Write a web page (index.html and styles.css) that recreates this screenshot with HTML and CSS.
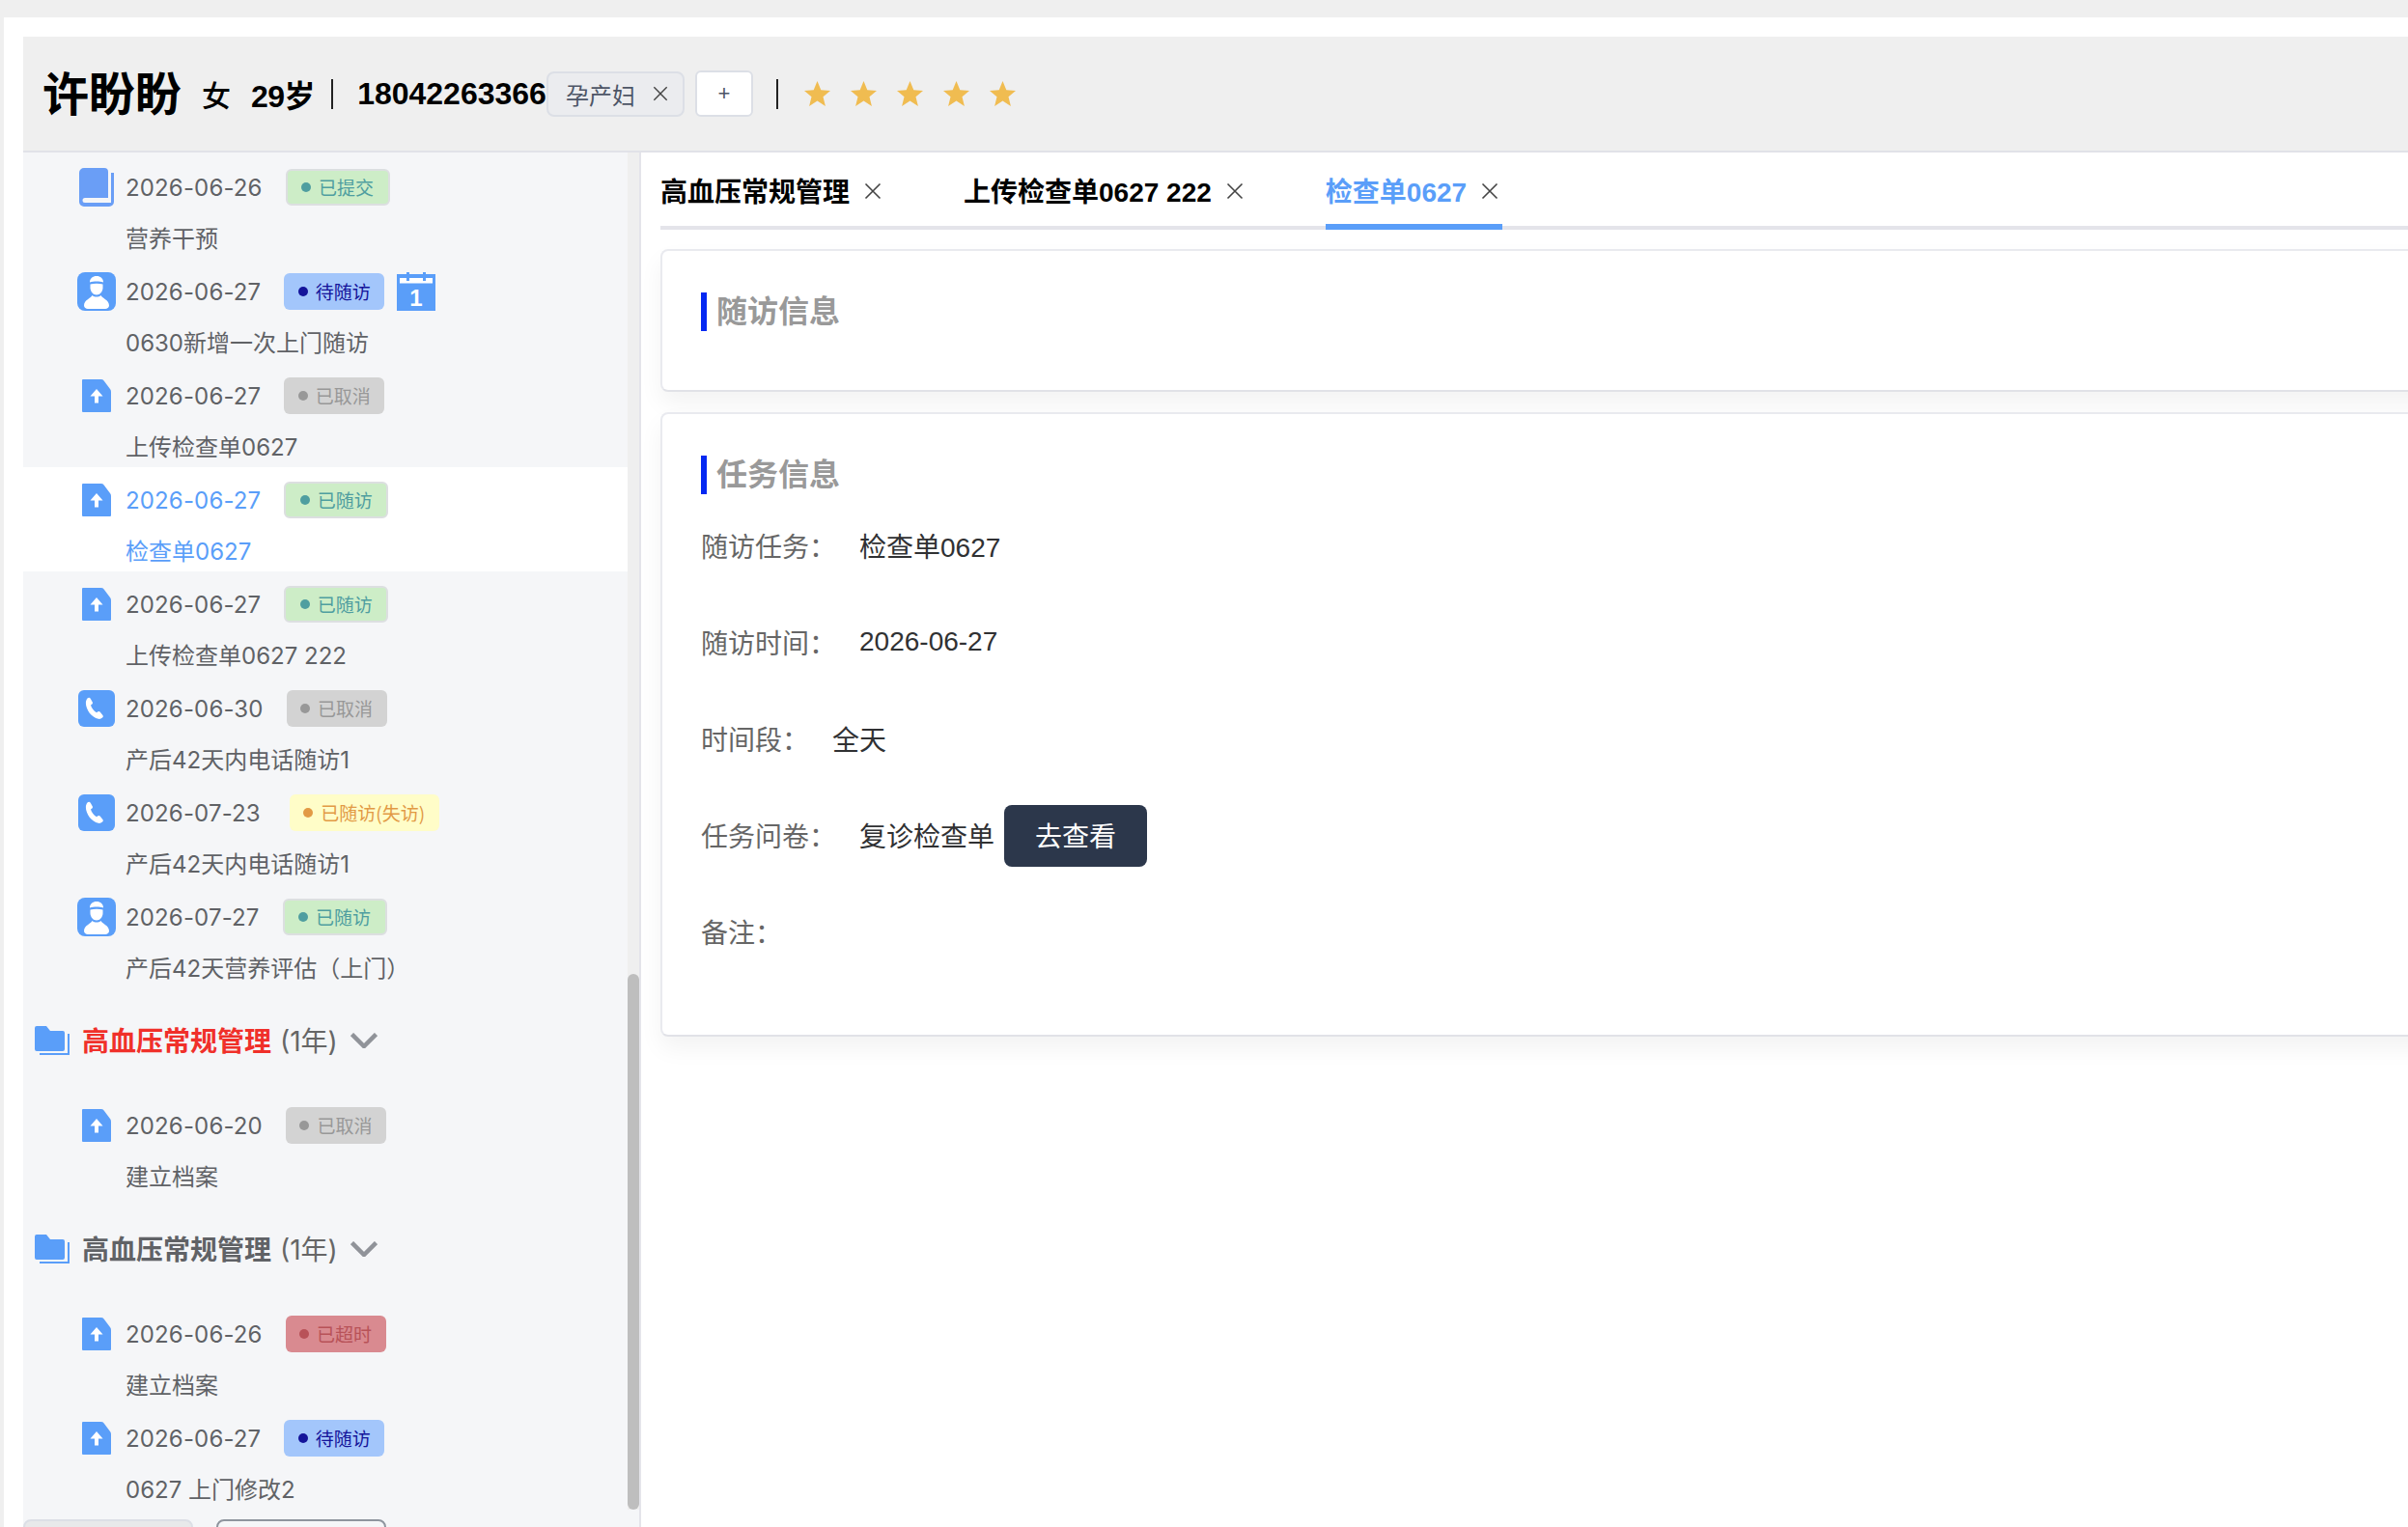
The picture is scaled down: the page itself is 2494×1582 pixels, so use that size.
FILE: index.html
```html
<!DOCTYPE html>
<html lang="zh-CN">
<head>
<meta charset="utf-8">
<title>随访</title>
<link rel="stylesheet" href="styles.css">
</head>
<body>
<svg class="defs" width="0" height="0" aria-hidden="true">
  <symbol id="i-book" viewBox="0 0 36 40"><path fill="#6a9ef6" d="M0 5a5 5 0 0 1 5-5h21a4 4 0 0 1 4 4v27H6a2.500 2.500 0 0 0 0 5h27V5h3v30a5 5 0 0 1-5 5H5a5 5 0 0 1-5-5z"/></symbol>
  <symbol id="i-person" viewBox="0 0 40 40"><rect width="40" height="40" rx="8" fill="#5a9ef9"/><path fill="#fff" d="M13 10.500c0-4 3-6.500 7-6.500s7 2.500 7 6.500c-4-1.300-10-1.300-14 0z"/><path fill="#fff" d="M13.500 12.500c4-1 9-1 13 0v3.500c0 4-3 7.500-6.500 7.500s-6.500-3.500-6.500-7.500z"/><path fill="#fff" d="M15.500 24c-1 3-8.500 4.500-8.500 10.500 0 2 2 3.500 4 3.500h18c2 0 4-1.500 4-3.500 0-6-7.500-7.500-8.500-10.500-1.200 1-3 1.500-4.500 1.500s-3.300-.5-4.500-1.500z"/></symbol>
  <symbol id="i-file" viewBox="0 0 30 34"><path fill="#5a9ef9" d="M1 0h19q2 0 3 2l6 8q1 1 1 3v20q0 1-1 1H1q-1 0-1-1V1q0-1 1-1z"/><path fill="#fff" d="M15 10l6.500 7.500h-4.500v7h-4v-7H8.500z"/></symbol>
  <symbol id="i-phone" viewBox="0 0 38 38"><rect width="38" height="38" rx="6" fill="#5a9ef9"/><path fill="#fff" d="M9.500 8.500c1-1 2.500-1 3.200.2l2 3.500c.5.9.3 1.800-.4 2.400l-1.300 1c.8 3 3 6 6 7.600l1.500-.9c.8-.5 1.700-.3 2.300.4l2.600 3.200c.7.900.5 2-.4 2.700-1.200 1-2.600 1.500-4.100 1.200-7-1.300-13-9.500-13-16.500 0-1.800.6-3.400 1.600-4.800z"/></symbol>
  <symbol id="i-folder" viewBox="0 0 36 31"><path fill="#5a9ef9" d="M2 0h10l4 5h13a2 2 0 0 1 2 2v17a2 2 0 0 1-2 2H2a2 2 0 0 1-2-2V2a2 2 0 0 1 2-2z"/><path fill="none" stroke="#5a9ef9" stroke-width="2" d="M5 29h30V8"/></symbol>
  <symbol id="i-chev" viewBox="0 0 28 16"><path fill="none" stroke="#909399" stroke-width="4.500" d="M1.500 1.500L14 14 26.500 1.500"/></symbol>
  <symbol id="i-x" viewBox="0 0 18 18"><path fill="none" stroke="#444" stroke-width="1.600" d="M1.500 1.500l15 15M16.500 1.500l-15 15"/></symbol>
  <symbol id="i-star" viewBox="0 0 27 26"><path fill="#f0bc51" d="M13.500 0l3.800 9.300 9.700.6-7.500 6.400 2.400 9.700-8.400-5.400-8.400 5.400 2.400-9.700L0 9.900l9.700-.6z"/></symbol>
</svg>

<div class="app">
  <header class="head">
    <h1 class="name">许盼盼</h1>
    <span class="sex">女</span>
    <span class="age">29岁</span>
    <i class="rule"></i>
    <span class="tel">18042263366</span>
    <span class="tag">孕产妇<svg class="tag-x"><use href="#i-x"/></svg></span>
    <button class="add">+</button>
    <i class="rule rule-2"></i>
    <div class="stars">
      <svg class="star"><use href="#i-star"/></svg>
      <svg class="star"><use href="#i-star"/></svg>
      <svg class="star"><use href="#i-star"/></svg>
      <svg class="star"><use href="#i-star"/></svg>
      <svg class="star"><use href="#i-star"/></svg>
    </div>
  </header>

  <div class="body">
    <aside class="side">
      <div class="side-top">
        <div class="list">
          <div class="row">
            <div class="line"><span class="ico"><svg class="i-book"><use href="#i-book"/></svg></span><span class="date">2026-06-26</span><span class="badge ok"><i></i>已提交</span></div>
            <div class="title">营养干预</div>
          </div>
          <div class="row">
            <div class="line"><span class="ico"><svg class="i-40"><use href="#i-person"/></svg></span><span class="date">2026-06-27</span><span class="badge wait"><i></i>待随访</span><svg class="i-40 cal" viewBox="0 0 40 40"><rect y="2" width="40" height="38" fill="#5a9ef9"/><rect x="3" y="6" width="34" height="5.500" fill="#fff"/><rect x="10" y="0" width="3" height="9" fill="#5a9ef9"/><rect x="27" y="0" width="3" height="9" fill="#5a9ef9"/><text class="cal-num" x="20" y="35" text-anchor="middle">1</text></svg></div>
            <div class="title">0630新增一次上门随访</div>
          </div>
          <div class="row">
            <div class="line"><span class="ico"><svg class="i-file"><use href="#i-file"/></svg></span><span class="date">2026-06-27</span><span class="badge off"><i></i>已取消</span></div>
            <div class="title">上传检查单0627</div>
          </div>
          <div class="row active">
            <div class="line"><span class="ico"><svg class="i-file"><use href="#i-file"/></svg></span><span class="date">2026-06-27</span><span class="badge ok"><i></i>已随访</span></div>
            <div class="title">检查单0627</div>
          </div>
          <div class="row">
            <div class="line"><span class="ico"><svg class="i-file"><use href="#i-file"/></svg></span><span class="date">2026-06-27</span><span class="badge ok"><i></i>已随访</span></div>
            <div class="title">上传检查单0627 222</div>
          </div>
          <div class="row">
            <div class="line"><span class="ico"><svg class="i-phone"><use href="#i-phone"/></svg></span><span class="date">2026-06-30</span><span class="badge off"><i></i>已取消</span></div>
            <div class="title">产后42天内电话随访1</div>
          </div>
          <div class="row">
            <div class="line"><span class="ico"><svg class="i-phone"><use href="#i-phone"/></svg></span><span class="date">2026-07-23</span><span class="badge warn"><i></i>已随访(失访)</span></div>
            <div class="title">产后42天内电话随访1</div>
          </div>
          <div class="row">
            <div class="line"><span class="ico"><svg class="i-40"><use href="#i-person"/></svg></span><span class="date">2026-07-27</span><span class="badge ok"><i></i>已随访</span></div>
            <div class="title">产后42天营养评估（上门）</div>
          </div>

          <div class="group">
            <svg class="i-folder"><use href="#i-folder"/></svg>
            <strong class="g-name red">高血压常规管理</strong>
            <span class="g-year">(1年)</span>
            <svg class="i-chev"><use href="#i-chev"/></svg>
          </div>
          <div class="row">
            <div class="line"><span class="ico"><svg class="i-file"><use href="#i-file"/></svg></span><span class="date">2026-06-20</span><span class="badge off"><i></i>已取消</span></div>
            <div class="title">建立档案</div>
          </div>

          <div class="group">
            <svg class="i-folder"><use href="#i-folder"/></svg>
            <strong class="g-name">高血压常规管理</strong>
            <span class="g-year">(1年)</span>
            <svg class="i-chev"><use href="#i-chev"/></svg>
          </div>
          <div class="row">
            <div class="line"><span class="ico"><svg class="i-file"><use href="#i-file"/></svg></span><span class="date">2026-06-26</span><span class="badge late"><i></i>已超时</span></div>
            <div class="title">建立档案</div>
          </div>
          <div class="row">
            <div class="line"><span class="ico"><svg class="i-file"><use href="#i-file"/></svg></span><span class="date">2026-06-27</span><span class="badge wait"><i></i>待随访</span></div>
            <div class="title">0627 上门修改2</div>
          </div>
        </div>
        <div class="track"><div class="thumb"></div></div>
      </div>
      <div class="side-foot">
        <button class="foot-btn"></button>
        <button class="foot-btn foot-btn-2"></button>
      </div>
    </aside>

    <main class="main">
      <nav class="tabs">
        <div class="tab"><span>高血压常规管理</span><svg class="tab-x"><use href="#i-x"/></svg></div>
        <div class="tab"><span>上传检查单0627 222</span><svg class="tab-x"><use href="#i-x"/></svg></div>
        <div class="tab on"><span>检查单0627</span><svg class="tab-x"><use href="#i-x"/></svg></div>
      </nav>

      <section class="card card-a">
        <h2 class="sec">随访信息</h2>
      </section>

      <section class="card card-b">
        <h2 class="sec">任务信息</h2>
        <div class="kv"><span class="k">随访任务：</span><span class="v">检查单0627</span></div>
        <div class="kv"><span class="k">随访时间：</span><span class="v">2026-06-27</span></div>
        <div class="kv"><span class="k">时间段：</span><span class="v">全天</span></div>
        <div class="kv"><span class="k">任务问卷：</span><span class="v">复诊检查单</span><button class="go">去查看</button></div>
        <div class="kv"><span class="k">备注：</span></div>
      </section>
    </main>
  </div>
</div>
</body>
</html>
```

FILE: styles.css
```css
* { box-sizing: border-box; }
html, body { margin: 0; height: 100%; }
body {
  background: #efefef;
  font-family: "Liberation Sans", "Noto Sans CJK SC", sans-serif;
  overflow: hidden;
}
.defs { display: block; width: 0; height: 0; }
.app {
  height: 1564px;
  margin: 18px 0 0 4px;
  padding: 20px 0 0 20px;
  background: #fff;
  display: flex;
  flex-direction: column;
  overflow: hidden;
}

/* header */
.head {
  flex: none;
  height: 120px;
  background: #efefef;
  border-bottom: 2px solid #e1e2e8;
  display: flex;
  align-items: center;
  padding-left: 20px;
  color: #000;
  font-weight: 700;
}
.name { margin: 0; padding-top: 3px; font-size: 48px; font-weight: 700; line-height: 1; }
.sex { font-size: 30px; margin-left: 21px; font-weight: 500; }
.age { font-size: 32px; margin-left: 21px; letter-spacing: -.5px; }
.rule { width: 2px; height: 31px; background: #222; margin-left: 17px; flex: none; }
.tel { font-size: 32px; margin-left: 25px; }
.tag {
  width: 143px;
  height: 47px;
  margin-left: 0;
  padding-left: 18px;
  display: flex;
  align-items: center;
  background: #ebecef;
  border: 2px solid #dcdfe6;
  border-radius: 8px;
  color: #4d5566;
  font-size: 24px;
  font-weight: 400;
}
.tag-x { width: 16px; height: 16px; margin-left: 18px; }
.add {
  width: 60px;
  height: 48px;
  margin-left: 11px;
  padding: 0;
  background: #fff;
  border: 2px solid #dcdfe6;
  border-radius: 6px;
  color: #4d5566;
  font: 400 22px "Liberation Sans", sans-serif;
}
.rule-2 { margin-left: 24px; }
.stars { display: flex; gap: 21px; margin-left: 27px; }
.star { width: 27px; height: 26px; display: block; }

/* layout */
.body { flex: 1; min-height: 0; display: flex; }
.side {
  flex: none;
  width: 640px;
  background: #f5f6f8;
  border-right: 2px solid #e4e4ea;
  display: flex;
  flex-direction: column;
}
.side-top { height: 1406px; flex: none; display: flex; overflow: hidden; }
.list { width: 626px; padding-top: 2px; }
.track {
  width: 12px;
  background: #efefef;
  display: flex;
  flex-direction: column;
  justify-content: flex-end;
}
.thumb { height: 555px; background: #bebebe; border-radius: 6px; }
.side-foot { display: flex; gap: 24px; padding-top: 10px; }
.foot-btn {
  width: 176px;
  height: 60px;
  padding: 0;
  background: #e8e9ea;
  border: 2px solid #dcdfe6;
  border-radius: 8px;
}
.foot-btn-2 { background: #f5f6f8; border-color: #8f959e; }

/* rows */
.row {
  height: 108px;
  padding-left: 56px;
  font-family: Inter, "Noto Sans CJK SC", sans-serif;
  font-size: 24px;
  color: #606266;
}
.row.active { background: #fff; color: #5a9ef9; }
.line { height: 68px; display: flex; align-items: center; }
.ico { width: 40px; height: 40px; flex: none; display: flex; align-items: center; justify-content: center; }
.date { margin: 2px 24px 0 10px; line-height: 1; letter-spacing: .15px; }
.title { margin-left: 50px; height: 38px; padding-top: 2px; line-height: 36px; white-space: nowrap; }
.i-40 { width: 40px; height: 40px; display: block; flex: none; }
.i-book { width: 36px; height: 40px; display: block; }
.i-file { width: 30px; height: 34px; display: block; }
.i-phone { width: 38px; height: 38px; display: block; }
.cal { margin-left: 13px; }
.cal-num { font: 700 24px "Liberation Sans", sans-serif; fill: #fff; }

.badge {
  height: 38px;
  padding: 0 14.500px 2px;
  display: inline-flex;
  align-items: center;
  gap: 8px;
  border-radius: 6px;
  font-family: "Noto Sans CJK SC", sans-serif;
  font-size: 19px;
  white-space: nowrap;
}
.badge i { width: 10px; height: 10px; margin-top: 2px; border-radius: 50%; background: currentColor; flex: none; }
.ok { background: #cdedc7; border: 2px solid #dcdfe0; color: #4f9ea0; }
.wait { background: #a3c6fb; color: #14149a; }
.off { background: #d3d3d3; color: #989898; }
.late { background: #d98a90; color: #b85258; }
.warn { background: #fffdc8; color: #e29a45; margin-left: 6px; }

/* group */
.group {
  height: 108px;
  padding: 0 0 2px 12px;
  display: flex;
  align-items: center;
  font-size: 28px;
  font-family: Inter, "Noto Sans CJK SC", sans-serif;
}
.i-folder { width: 36px; height: 31px; display: block; margin-top: 2px; }
.g-name { margin-left: 13px; color: #606266; font-weight: 700; }
.g-name.red { color: #f0302a; }
.g-year { margin-left: 9px; color: #666; }
.i-chev { width: 28px; height: 16px; margin: 2px 0 0 13px; }

/* main */
.main { flex: 1; min-width: 0; padding-left: 20px; overflow: hidden; }
.tabs {
  width: 1900px;
  height: 80px;
  border-bottom: 4px solid #e4e4ea;
  display: flex;
  gap: 81px;
  align-items: flex-start;
}
.tab {
  height: 80px;
  padding: 3px 4px 0 0;
  display: flex;
  align-items: center;
  border-bottom: 6px solid transparent;
  font-size: 28px;
  font-weight: 700;
  color: #000;
  white-space: nowrap;
}
.tab.on { color: #5a9ef9; border-bottom-color: #5a9ef9; }
.tab-x { width: 18px; height: 18px; margin: 2px 0 0 15px; }

.card {
  width: 1900px;
  background: #fff;
  border: 2px solid #e9eaef;
  border-bottom-color: #e1e2e7;
  border-radius: 8px;
  box-shadow: 0 12px 24px rgba(0, 0, 0, .05);
}
.card-a { height: 148px; margin-top: 20px; padding: 43px 0 0 40px; }
.card-b { height: 647px; margin-top: 21px; padding: 43px 0 0 40px; }
.sec {
  margin: 0;
  height: 40px;
  border-left: 6px solid #0528f2;
  padding-left: 10px;
  font-size: 32px;
  font-weight: 700;
  line-height: 40px;
  color: #999;
}
.card-b .sec { margin-bottom: 4px; }
.kv { height: 100px; padding-bottom: 3px; display: flex; align-items: center; font-size: 28px; }
.k { color: #666; margin-right: 24px; }
.v { color: #303133; }
.go {
  width: 148px;
  height: 64px;
  margin: 3px 0 0 10px;
  padding: 0 0 2px;
  background: #2c374b;
  border: 0;
  border-radius: 8px;
  color: #fff;
  font: 400 28px "Liberation Sans", "Noto Sans CJK SC", sans-serif;
}
```
